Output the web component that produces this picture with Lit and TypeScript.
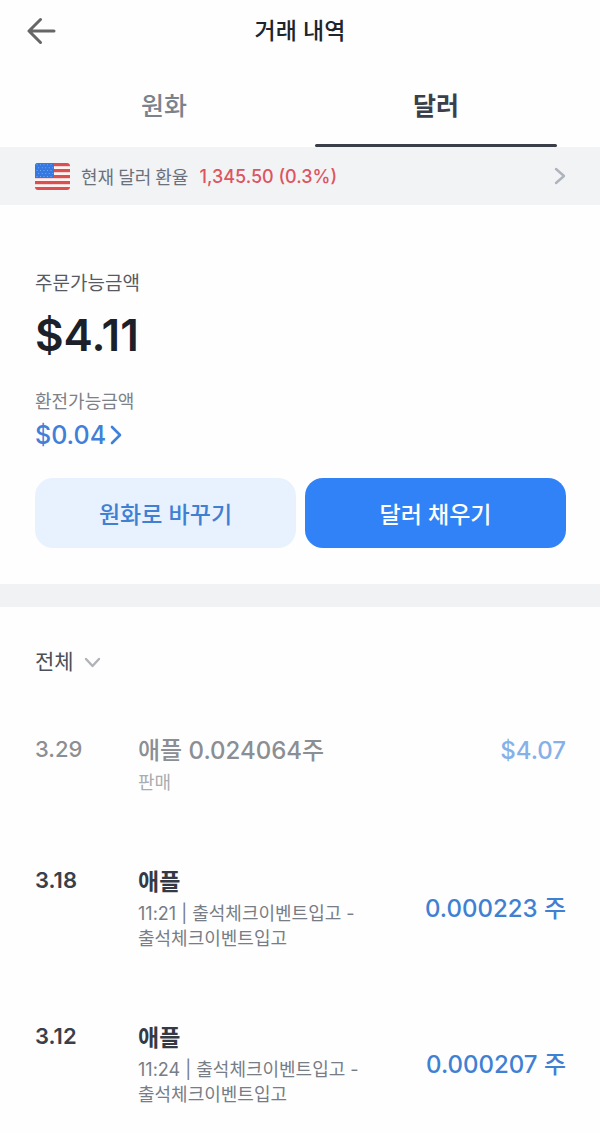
import { LitElement, html, css, svg } from "lit";
import { customElement, property, state } from "lit/decorators.js";
import { classMap } from "lit/directives/class-map.js";

interface Entry {
  date: string;
  title: string;
  detail: string[];
  amount: string;
  muted?: boolean;
}

const ENTRIES: Entry[] = [
  { date: "3.29", title: "애플 0.024064주", detail: ["판매"], amount: "$4.07", muted: true },
  { date: "3.18", title: "애플", detail: ["11:21 | 출석체크이벤트입고 -", "출석체크이벤트입고"], amount: "0.000223 주" },
  { date: "3.12", title: "애플", detail: ["11:24 | 출석체크이벤트입고 -", "출석체크이벤트입고"], amount: "0.000207 주" },
];

const TABS = ["원화", "달러"];

@customElement("us-flag")
class UsFlag extends LitElement {
  static styles = css`
    :host { display: block; width: 35px; height: 27px; flex: none; }
    .flag { display: block; width: 100%; height: 100%; border-radius: 3px; }
  `;

  render() {
    const stars: { x: number; y: number }[] = [];
    for (let row = 0; row < 5; row++) {
      for (let col = 0; col < 5; col++) {
        stars.push({ x: 2 + col * 3.5 + (row % 2 ? 1.7 : 0), y: 1.8 + row * 2.9 });
      }
    }
    return html`
      <svg class="flag" viewBox="0 0 35 27" aria-hidden="true">
        <rect width="35" height="27" fill="#fbf3f2" />
        ${[0, 6, 12, 18, 24].map((y) => svg`<rect y=${y} width="35" height="3.2" fill="#dc4f50" />`)}
        <rect width="19" height="15" fill="#3478e0" />
        ${stars.map((s) => svg`<circle cx=${s.x} cy=${s.y} r="0.5" fill="#8fb8f5" />`)}
      </svg>
    `;
  }
}

@customElement("history-row")
class HistoryRow extends LitElement {
  @property({ attribute: false }) entry!: Entry;

  static styles = css`
    :host { display: block; }
    .row {
      display: grid;
      grid-template-columns: 103px 1fr auto;
      align-items: center;
    }
    .date {
      align-self: start;
      font-size: 22px;
      line-height: 28px;
      font-weight: 600;
      color: #3a3f49;
    }
    .title {
      margin: 0 0 3px;
      font-size: 23px;
      line-height: 32px;
      font-weight: 600;
      color: #333a45;
    }
    .detail {
      margin: 0;
      font-size: 18px;
      line-height: 25px;
      color: #777d86;
    }
    .amount {
      font-size: 24px;
      line-height: 32px;
      font-weight: 500;
      color: #3f80d3;
      white-space: nowrap;
    }
    .muted { align-items: start; }
    .muted .date, .muted .title { font-weight: 500; color: #8b8e93; }
    .muted .title { font-size: 24px; }
    .muted .detail { color: #a9acb0; }
    .muted .amount { color: #86b0e8; }
  `;

  render() {
    const e = this.entry;
    return html`
      <article class=${classMap({ row: true, muted: !!e.muted })}>
        <time class="date">${e.date}</time>
        <div>
          <h2 class="title">${e.title}</h2>
          ${e.detail.map((line) => html`<p class="detail">${line}</p>`)}
        </div>
        <span class="amount">${e.amount}</span>
      </article>
    `;
  }
}

@customElement("app-root")
class AppRoot extends LitElement {
  @state() private tab = 1;

  static styles = css`
    :host {
      display: block;
      min-height: 100vh;
      background: #fefefe;
      font-family: Inter, "Noto Sans CJK KR", sans-serif;
      color: #333a45;
    }
    button, select { font: inherit; color: inherit; border: 0; background: none; padding: 0; margin: 0; cursor: pointer; }
    a { color: inherit; text-decoration: none; }
    svg { display: block; flex: none; fill: none; stroke: currentColor; stroke-linecap: round; stroke-linejoin: round; }

    .header {
      display: grid;
      grid-template-columns: 1fr auto 1fr;
      align-items: center;
      height: 62px;
      padding: 0 27px;
    }
    .back { justify-self: start; color: #666; }
    .heading { margin: 0; font-size: 23px; line-height: 32px; font-weight: 500; color: #20242b; }

    .tabs { display: flex; height: 85px; padding: 0 28px; }
    .tab {
      flex: 1;
      display: flex;
      flex-direction: column;
      align-items: stretch;
      padding: 0 15px;
      font-size: 25px;
      font-weight: 500;
      color: #7b828c;
    }
    .tab-label { flex: 1; display: grid; place-items: center; padding-top: 2px; }
    .tab::after { content: ""; height: 3px; border-radius: 2px; }
    .selected { font-weight: 600; color: #3a404b; }
    .selected::after { background: #3a3e47; }

    .rate {
      display: flex;
      align-items: center;
      height: 58px;
      padding: 0 34px 0 35px;
      background: #f2f3f5;
      font-size: 18px;
      color: #6a717c;
    }
    .rate-label { margin: 0 11px; font-family: "Noto Sans CJK KR", sans-serif; line-height: 24px; }
    .rate-value { flex: 1; font-weight: 500; color: #dc5560; }
    .rate-arrow { color: #aeb3bc; }

    .account { padding: 65px 34px 36px 35px; }
    .label { margin: 0; font-size: 19px; line-height: 28px; color: #565b63; }
    .balance { margin: 10px 0 28px; font-size: 44px; line-height: 54px; font-weight: 600; color: #1b2029; }
    .sublabel { margin: 0 0 6px; font-size: 18px; line-height: 24px; color: #7c8188; }
    .exchange {
      display: inline-flex;
      align-items: center;
      gap: 4px;
      font-size: 25px;
      line-height: 30px;
      font-weight: 500;
      color: #3f80d8;
    }
    .actions { display: flex; gap: 9px; margin-top: 28px; }
    .action { flex: 1; height: 70px; border-radius: 18px; font-size: 23px; font-weight: 500; }
    .soft { background: #e8f2fe; color: #3f80d3; }
    .solid { background: #3182f6; color: #fff; }

    .divider { height: 23px; background: #f1f2f4; }

    .history { padding: 39px 34px 20px 35px; }
    .filter { display: inline-flex; align-items: center; gap: 10px; color: #4a4f58; }
    .filter-select { appearance: none; font-size: 21px; line-height: 32px; }
    .filter-arrow { color: #b0b3b8; }
    .list { display: grid; gap: 71px; margin-top: 57px; }
  `;

  render() {
    return html`
      <header class="header">
        <button class="back" aria-label="뒤로">
          <svg width="29" height="28" viewBox="0 0 29 28" stroke-width="3">
            <path d="M27 14H2.5M13.5 2.5L2 14l11.5 11.5" />
          </svg>
        </button>
        <h1 class="heading">거래 내역</h1>
      </header>

      <nav class="tabs" role="tablist">
        ${TABS.map(
          (name, i) => html`
            <button
              role="tab"
              aria-selected=${this.tab === i ? "true" : "false"}
              class=${classMap({ tab: true, selected: this.tab === i })}
              @click=${() => (this.tab = i)}
            ><span class="tab-label">${name}</span></button>
          `,
        )}
      </nav>

      <a class="rate" href="#rate">
        <us-flag></us-flag>
        <span class="rate-label">현재 달러 환율</span>
        <span class="rate-value">1,345.50 (0.3%)</span>
        <svg class="rate-arrow" width="12" height="18" viewBox="0 0 12 18" stroke-width="2.4">
          <path d="M2 2l8 7-8 7" />
        </svg>
      </a>

      <section class="account">
        <p class="label">주문가능금액</p>
        <p class="balance">$4.11</p>
        <p class="sublabel">환전가능금액</p>
        <a class="exchange" href="#exchange">
          $0.04
          <svg width="12" height="20" viewBox="0 0 12 20" stroke-width="2.6">
            <path d="M2 2l8 8-8 8" />
          </svg>
        </a>
        <div class="actions">
          <button class="action soft">원화로 바꾸기</button>
          <button class="action solid">달러 채우기</button>
        </div>
      </section>

      <div class="divider"></div>

      <section class="history">
        <label class="filter">
          <select class="filter-select" aria-label="전체"><option>전체</option></select>
          <svg class="filter-arrow" width="17" height="11" viewBox="0 0 17 11" stroke-width="2.4">
            <path d="M2 2l6.500 7L15 2" />
          </svg>
        </label>
        <div class="list">
          ${ENTRIES.map((entry) => html`<history-row .entry=${entry}></history-row>`)}
        </div>
      </section>
    `;
  }
}
